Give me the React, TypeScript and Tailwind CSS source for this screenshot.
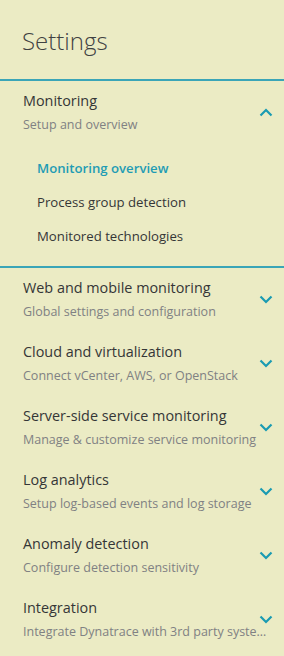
import { useState } from "react";

type Section = {
  title: string;
  subtitle: string;
  links?: { label: string; active?: boolean }[];
};

const sections: Section[] = [
  {
    title: "Monitoring",
    subtitle: "Setup and overview",
    links: [
      { label: "Monitoring overview", active: true },
      { label: "Process group detection" },
      { label: "Monitored technologies" },
    ],
  },
  { title: "Web and mobile monitoring", subtitle: "Global settings and configuration" },
  { title: "Cloud and virtualization", subtitle: "Connect vCenter, AWS, or OpenStack" },
  { title: "Server-side service monitoring", subtitle: "Manage & customize service monitoring" },
  { title: "Log analytics", subtitle: "Setup log-based events and log storage" },
  { title: "Anomaly detection", subtitle: "Configure detection sensitivity" },
  { title: "Integration", subtitle: "Integrate Dynatrace with 3rd party systems" },
];

function Chevron({ up }: { up?: boolean }) {
  return (
    <svg width="14" height="9" viewBox="0 0 14 9" aria-hidden>
      <path
        d={up ? "M1.5 7.5 L7 2 L12.5 7.5" : "M1.5 1.5 L7 7 L12.5 1.5"}
        fill="none"
        stroke="#1a9bb2"
        strokeWidth="2.2"
      />
    </svg>
  );
}

export default function App() {
  const [open, setOpen] = useState(0);

  return (
    <div className="h-[656px] w-[284px] overflow-hidden bg-[#ebebc4] font-['Open_Sans',sans-serif]">
      {/* header */}
      <h1 className="h-[79px] px-[22px] pt-[26px] text-[24px] font-light leading-[30px] text-[#3f4142]">
        Settings
      </h1>

      <div className="h-[2px] bg-[#3aa5b7]" />

      {sections.map((s, i) => (
        <div key={s.title}>
          <button
            onClick={() => setOpen(open === i ? -1 : i)}
            className="relative block w-full py-[10px] pl-[23px] pr-[12px] text-left"
          >
            <span className="block text-[14.4px] leading-[20px] text-[#353637]">{s.title}</span>
            <span className="mt-[4px] block truncate text-[12.5px] leading-[20px] text-[#808183]">
              {s.subtitle}
            </span>
            <span className="absolute right-[11px] top-[27px]">
              <Chevron up={open === i} />
            </span>
          </button>

          {open === i && s.links && (
            <>
              <ul className="flex flex-col gap-[14px] pb-[20px] pl-[37px] pt-[13px]">
                {s.links.map((l) => (
                  <li
                    key={l.label}
                    className={
                      l.active
                        ? "text-[13.2px] font-semibold leading-[20px] text-[#1f9cb4]"
                        : "text-[13.2px] leading-[20px] text-[#353637]"
                    }
                  >
                    {l.label}
                  </li>
                ))}
              </ul>
              <div className="h-[2px] bg-[#3aa5b7]" />
            </>
          )}
        </div>
      ))}
    </div>
  );
}
